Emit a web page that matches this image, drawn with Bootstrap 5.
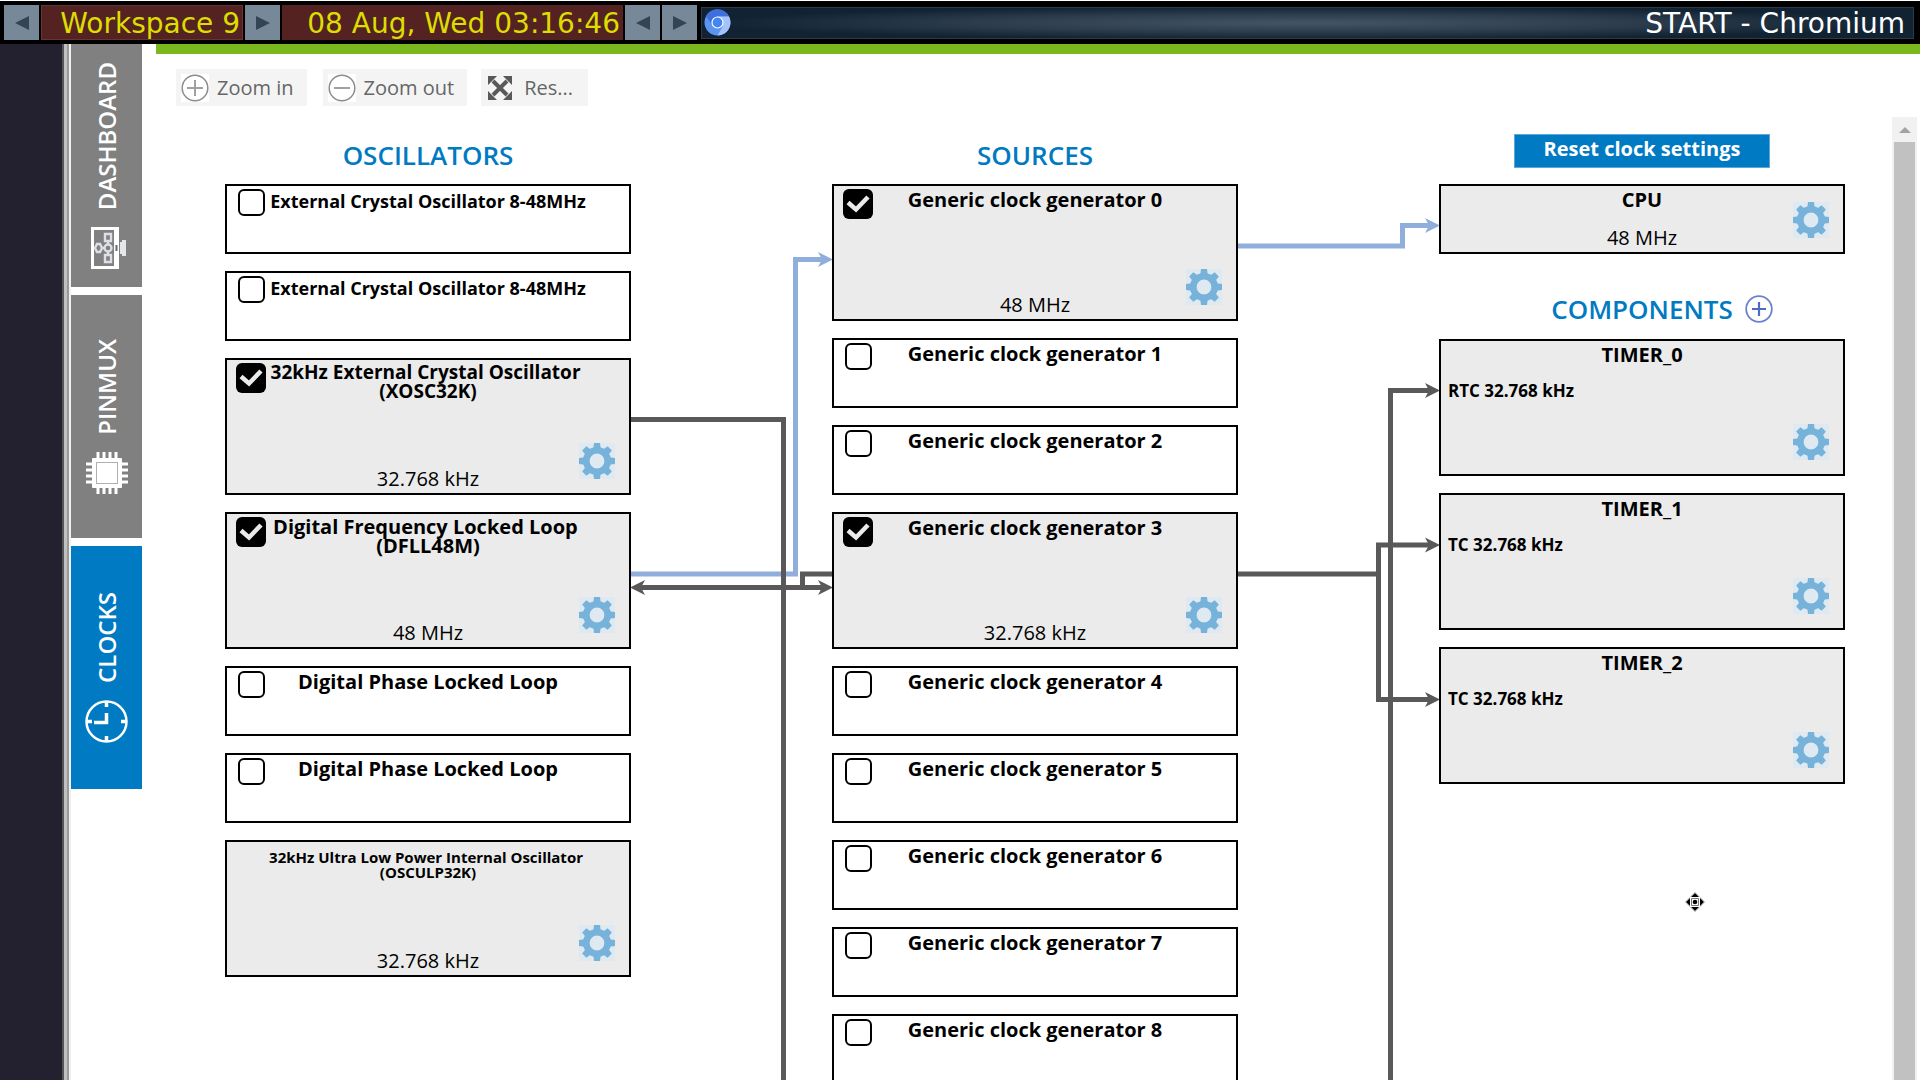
<!DOCTYPE html>
<html lang="en">
<head>
<meta charset="utf-8">
<meta name="viewport" content="width=device-width, initial-scale=1">
<title>START - Clocks</title>
<link href="https://cdn.jsdelivr.net/npm/bootstrap@5.3.0/dist/css/bootstrap.min.css" rel="stylesheet">
<style>
  body { font-family: "Open Sans", "Noto Sans", sans-serif; font-size: 20px; line-height: 24px; color: #000; background: #fff; }
  button { font-family: inherit; }

  /* desktop panel */
  .desk-bar { height: 44px; padding: 4px 6px 4px 4px; gap: 2px; background: #000; border-top: 1px solid #fff; font-family: "DejaVu Sans", sans-serif; font-size: 28px; line-height: 38px; }
  .desk-arrow { width: 35px; height: 35px; padding: 0; border: 0; background: #778899; color: #334455; }
  .desk-arrow svg { display: block; margin: auto; }
  .desk-cell { height: 35px; padding: 0 3px; background: #552222; color: #dddd00; text-align: right; white-space: nowrap; }
  .desk-space { width: 202px; border: 1px solid #6b3434; padding-right: 2px; line-height: 36px; }
  .desk-date { width: 341px; }
  .desk-title { height: 32px; margin-left: 2px; padding: 0 8px 0 2px; border: 1px solid #2c3b49; color: #fff;
    background: radial-gradient(ellipse 50% 55% at 50% 50%, #445566 0%, #2c3c4c 55%, #112233 100%); }
  .desk-title span { padding-top: 2px; }

  /* side rail */
  .rail-dark { width: 62px; background: #232130; }
  .rail-split { width: 9px; background: linear-gradient(90deg, #555 0 2px, #c0c0c0 2px 5px, #999 5px 7px, #f0f0f0 7px); }
  .side-tabs { width: 71px; gap: 8px; margin-right: 14px; }
  .side-tab { height: 243px; gap: 17px; background: #808080; color: #fff; font-size: 24px; line-height: 32px; text-decoration: none; }
  .side-tab.current { background: #007ac2; }
  .side-tab span { writing-mode: vertical-rl; transform: rotate(180deg); font-weight: 600; }

  /* tool buttons */
  .app-main { border-top: 10px solid #7ab81e; }
  .tool-row { padding: 15px 20px 11px; }
  .tool-btn { height: 37px; border: 0; background: #f4f4f4; color: #666; padding: 0 13px 0 5px; gap: 8px; }
  .tool-btn.reset-view { padding: 0 15px 0 7px; gap: 12px; margin-left: -2px; }

  /* diagram */
  .clock-canvas { padding: 0 47px 0 69px; }
  .wire-gap { width: 201px; }
  .wire-gap svg { display: block; overflow: visible; }
  .node-col { flex: 1 1 0; min-width: 0; gap: 17px; }
  .col-head { height: 50px; padding-top: 22px; margin: 0; font-size: 26px; line-height: 32px; font-weight: 600; color: #007ac2; text-align: center; }
  .col-head.with-add { height: 51px; padding: 24px 0 0 40px; gap: 12px; }
  .reset-clocks { width: 256px; height: 34px; margin: 17px auto 0; padding: 0 0 4px; border: 1px solid #5aa9da; background: #007ac2; color: #fff; font-weight: 700; line-height: 28px; }
  .head-slot { height: 50px; }
  .clk-node { height: 70px; flex-shrink: 0; border: 2px solid #000; background: #fff; position: relative; z-index: 1; }
  .clk-node.on { background: #ebebeb; }
  .clk-node.tall { height: 137px; }
  .tick-slot { width: 38px; }
  .tick-slot input { appearance: none; display: block; width: 27px; height: 27px; margin: 3px 0 0 11px; border: 2px solid #000; border-radius: 6px; background: #fff; }
  .tick-slot input:checked { width: 30px; height: 30px; margin-left: 9px; border: 0;
    background: #000 url("data:image/svg+xml,%3Csvg xmlns='http://www.w3.org/2000/svg' viewBox='0 0 30 30'%3E%3Cpath d='M5 13.500l8 7L25 8' fill='none' stroke='%23ebebeb' stroke-width='4.500'/%3E%3C/svg%3E"); }
  .node-name { padding-top: 2px; font-weight: 700; line-height: 24px; text-align: center; white-space: nowrap; }
  .node-name.two-line { padding-top: 3px; line-height: 19px; }
  .node-name.narrow { font-size: 19px; }
  .node-name.mid { padding-top: 3px; font-size: 18px; }
  .node-name.fine { padding-top: 8px; font-size: 15px; line-height: 15px; }
  .node-rate { position: absolute; left: 0; right: 0; bottom: 2px; text-align: center; }
  .node-input { padding: 12px 0 0 7px; font-size: 17px; font-weight: 700; }
  .gear-btn { position: absolute; right: 14px; bottom: 14px; width: 36px; height: 36px; padding: 0; border: 0; background: #dfe9f1; }
  .gear-btn svg, .add-btn svg { display: block; }
  .add-btn { padding: 0; border: 0; background: none; }

  .scroll-track { width: 25px; margin-right: 3px; background: #f1f1f1; }
  .scroll-thumb { margin: 0 2px; background: #c1c1c1; }
  .scroll-cap { height: 25px; }
  .move-pointer { position: absolute; left: 1685px; top: 892px; z-index: 5; }
</style>
<script src="https://cdn.jsdelivr.net/npm/bootstrap@5.3.0/dist/js/bootstrap.bundle.min.js"></script>
</head>
<body class="vh-100 overflow-hidden d-flex flex-column">

<svg class="d-none">
  <symbol id="gear" viewBox="0 0 36 36">
    <g fill="#76b2d9">
      <path id="tooth" d="M15 0h6l1 8h-8z"/>
      <use href="#tooth" transform="rotate(45 18 18)"/><use href="#tooth" transform="rotate(90 18 18)"/>
      <use href="#tooth" transform="rotate(135 18 18)"/><use href="#tooth" transform="rotate(180 18 18)"/>
      <use href="#tooth" transform="rotate(225 18 18)"/><use href="#tooth" transform="rotate(270 18 18)"/>
      <use href="#tooth" transform="rotate(315 18 18)"/>
    </g>
    <circle cx="18" cy="18" r="10.700" fill="none" stroke="#76b2d9" stroke-width="6.600"/>
  </symbol>
  <symbol id="tri-left" viewBox="0 0 14 14"><path d="M14 0v14L0 7z" fill="currentColor"/></symbol>
  <symbol id="tri-right" viewBox="0 0 14 14"><path d="M0 0v14l14-7z" fill="currentColor"/></symbol>
</svg>

<header class="desk-bar d-flex flex-shrink-0">
  <button class="desk-arrow" aria-label="Previous workspace"><svg width="14" height="14"><use href="#tri-left"/></svg></button>
  <div class="desk-cell desk-space">Workspace 9</div>
  <button class="desk-arrow" aria-label="Next workspace"><svg width="14" height="14"><use href="#tri-right"/></svg></button>
  <div class="desk-cell desk-date">08 Aug, Wed 03:16:46</div>
  <button class="desk-arrow" aria-label="Previous window"><svg width="14" height="14"><use href="#tri-left"/></svg></button>
  <button class="desk-arrow" aria-label="Next window"><svg width="14" height="14"><use href="#tri-right"/></svg></button>
  <div class="desk-title d-flex flex-fill justify-content-between align-items-center align-self-center">
    <svg width="27" height="27" viewBox="0 0 27 27">
      <circle cx="13.500" cy="13.500" r="13" fill="#5b95f0"/>
      <path d="M2 7A13 13 0 0 1 25 7.500H13.500L8 16z" fill="#3f6fdb"/>
      <path d="M13.500 7.500H25A13 13 0 0 1 13.500 26.500L19 17z" fill="#a5c3fb"/>
      <circle cx="13.500" cy="13.500" r="5.500" fill="#4285f4" stroke="#fff" stroke-width="1.200"/>
    </svg>
    <span>START - Chromium</span>
  </div>
</header>

<div class="d-flex flex-fill overflow-hidden">
  <div class="rail-dark flex-shrink-0"></div>
  <div class="rail-split flex-shrink-0"></div>
  <nav class="side-tabs d-flex flex-column flex-shrink-0">
    <a href="#" class="side-tab d-flex flex-column align-items-center justify-content-center flex-shrink-0">
      <span>DASHBOARD</span>
      <svg width="42" height="42" viewBox="0 0 42 42" fill="none" stroke="#fff">
        <path d="M6.500 1.500h25v39h-25z" stroke-width="3"/><path d="M28 1v40h5V1z" fill="#fff" stroke="none"/>
        <path d="M34 15h2v-2h4v16h-4v-2h-2z" fill="#e4e6ea" stroke="none"/><path d="M29.500 18h2v6h-2z" fill="#667" stroke="none"/>
        <g stroke-width="2.400" stroke="#dcdfe4"><path d="M19 7h6v7h-6zM19 28h6v7h-6z"/><circle cx="22" cy="21" r="3.500"/><path d="M9 21l2-4h3l2 4-2 4h-3zM16 21h3M22 14v4M22 24v4"/></g>
      </svg>
    </a>
    <a href="#" class="side-tab d-flex flex-column align-items-center justify-content-center flex-shrink-0">
      <span>PINMUX</span>
      <svg width="42" height="42" viewBox="0 0 42 42">
        <path d="M12 0v42M18 0v42M24 0v42M30 0v42M0 12h42M0 18h42M0 24h42M0 30h42" stroke="#fff" stroke-width="3"/>
        <rect x="6" y="6" width="30" height="30" rx="1" fill="#fff"/>
        <rect x="10.500" y="10.500" width="21" height="21" fill="#fff" stroke="#b0b0b0"/>
      </svg>
    </a>
    <a href="#" class="side-tab current d-flex flex-column align-items-center justify-content-center flex-shrink-0">
      <span>CLOCKS</span>
      <svg width="43" height="43" viewBox="0 0 43 43" fill="none" stroke="#fff">
        <circle cx="21.500" cy="21.500" r="20" stroke-width="2.500"/>
        <path d="M21.500 1v6M21.500 36v6M1 21.500h6M36 21.500h6" stroke-width="3.500"/>
        <path d="M21.500 13v9.500H9" stroke-width="3.500"/>
      </svg>
    </a>
  </nav>

  <main class="app-main d-flex flex-column flex-fill overflow-hidden">
    <div class="tool-row d-flex gap-3 flex-shrink-0">
      <button class="tool-btn d-flex align-items-center">
        <svg width="28" height="28" viewBox="0 0 28 28" fill="none" stroke="#8c8c8c"><path d="M0 0h28v28H0z" fill="#fff" stroke="none"/><circle cx="14" cy="14" r="12.800" stroke-width="1.500"/><path d="M6 14h16M14 6v16" stroke-width="2" stroke="#a0a0a0"/></svg>
        Zoom in
      </button>
      <button class="tool-btn d-flex align-items-center">
        <svg width="28" height="28" viewBox="0 0 28 28" fill="none" stroke="#8c8c8c"><path d="M0 0h28v28H0z" fill="#fff" stroke="none"/><circle cx="14" cy="14" r="12.800" stroke-width="1.500"/><path d="M6 14h16" stroke-width="2" stroke="#a0a0a0"/></svg>
        Zoom out
      </button>
      <button class="tool-btn reset-view d-flex align-items-center">
        <svg width="24" height="24" viewBox="0 0 24 24"><path d="M5 5l14 14M19 5L5 19" stroke="#595959" stroke-width="4"/><path d="M0 0h9L0 9zM24 0v9l-9-9zM0 24v-9l9 9zM24 24h-9l9-9z" fill="#595959"/></svg>
        Res...
      </button>
    </div>

    <div class="d-flex flex-fill overflow-hidden">
      <div class="clock-canvas d-flex flex-fill overflow-hidden">

        <section class="node-col d-flex flex-column">
          <h2 class="col-head">OSCILLATORS</h2>
          <div class="clk-node d-flex">
            <div class="tick-slot"><input type="checkbox" id="xosc0"></div>
            <label class="node-name mid flex-fill" for="xosc0">External Crystal Oscillator 8-48MHz</label><div class="tick-slot"></div>
          </div>
          <div class="clk-node d-flex">
            <div class="tick-slot"><input type="checkbox" id="xosc1"></div>
            <label class="node-name mid flex-fill" for="xosc1">External Crystal Oscillator 8-48MHz</label><div class="tick-slot"></div>
          </div>
          <div class="clk-node tall on d-flex">
            <div class="tick-slot"><input type="checkbox" id="xosc32k" checked></div>
            <label class="node-name two-line narrow flex-fill" for="xosc32k">32kHz External Crystal Oscillator&nbsp;<br>(XOSC32K)</label><div class="tick-slot"></div>
            <div class="node-rate">32.768 kHz</div>
            <button class="gear-btn" aria-label="XOSC32K settings"><svg width="36" height="36"><use href="#gear"/></svg></button>
          </div>
          <div class="clk-node tall on d-flex">
            <div class="tick-slot"><input type="checkbox" id="dfll" checked></div>
            <label class="node-name two-line flex-fill" for="dfll">Digital Frequency Locked Loop&nbsp;<br>(DFLL48M)</label><div class="tick-slot"></div>
            <div class="node-rate">48 MHz</div>
            <button class="gear-btn" aria-label="DFLL48M settings"><svg width="36" height="36"><use href="#gear"/></svg></button>
          </div>
          <div class="clk-node d-flex">
            <div class="tick-slot"><input type="checkbox" id="dpll0"></div>
            <label class="node-name flex-fill" for="dpll0">Digital Phase Locked Loop</label><div class="tick-slot"></div>
          </div>
          <div class="clk-node d-flex">
            <div class="tick-slot"><input type="checkbox" id="dpll1"></div>
            <label class="node-name flex-fill" for="dpll1">Digital Phase Locked Loop</label><div class="tick-slot"></div>
          </div>
          <div class="clk-node tall on">
            <div class="node-name fine">32kHz Ultra Low Power Internal Oscillator&nbsp;<br>(OSCULP32K)</div>
            <div class="node-rate">32.768 kHz</div>
            <button class="gear-btn" aria-label="OSCULP32K settings"><svg width="36" height="36"><use href="#gear"/></svg></button>
          </div>
        </section>

        <div class="wire-gap flex-shrink-0">
          <svg width="201" height="963" viewBox="631 117 201 963" fill="none" stroke-width="5">
            <path d="M631 574H795.500V259.500H826" stroke="#8faedc"/>
            <path d="M833 259.500l-15-7.500 4 7.500-4 7.500z" fill="#8faedc"/>
            <path d="M631 419.500H783.500V1100M637 587.500H826M832 574H802.500V587.500" stroke="#595959"/>
            <path d="M833 587.500l-15-7.500 4 7.500-4 7.500zM630 587.500l15-7.500-4 7.500 4 7.500z" fill="#595959"/>
          </svg>
        </div>

        <section class="node-col d-flex flex-column">
          <h2 class="col-head">SOURCES</h2>
          <div class="clk-node tall on d-flex">
            <div class="tick-slot"><input type="checkbox" id="gen0" checked></div>
            <label class="node-name flex-fill" for="gen0">Generic clock generator 0</label><div class="tick-slot"></div>
            <div class="node-rate">48 MHz</div>
            <button class="gear-btn" aria-label="Generator 0 settings"><svg width="36" height="36"><use href="#gear"/></svg></button>
          </div>
          <div class="clk-node d-flex">
            <div class="tick-slot"><input type="checkbox" id="gen1"></div>
            <label class="node-name flex-fill" for="gen1">Generic clock generator 1</label><div class="tick-slot"></div>
          </div>
          <div class="clk-node d-flex">
            <div class="tick-slot"><input type="checkbox" id="gen2"></div>
            <label class="node-name flex-fill" for="gen2">Generic clock generator 2</label><div class="tick-slot"></div>
          </div>
          <div class="clk-node tall on d-flex">
            <div class="tick-slot"><input type="checkbox" id="gen3" checked></div>
            <label class="node-name flex-fill" for="gen3">Generic clock generator 3</label><div class="tick-slot"></div>
            <div class="node-rate">32.768 kHz</div>
            <button class="gear-btn" aria-label="Generator 3 settings"><svg width="36" height="36"><use href="#gear"/></svg></button>
          </div>
          <div class="clk-node d-flex">
            <div class="tick-slot"><input type="checkbox" id="gen4"></div>
            <label class="node-name flex-fill" for="gen4">Generic clock generator 4</label><div class="tick-slot"></div>
          </div>
          <div class="clk-node d-flex">
            <div class="tick-slot"><input type="checkbox" id="gen5"></div>
            <label class="node-name flex-fill" for="gen5">Generic clock generator 5</label><div class="tick-slot"></div>
          </div>
          <div class="clk-node d-flex">
            <div class="tick-slot"><input type="checkbox" id="gen6"></div>
            <label class="node-name flex-fill" for="gen6">Generic clock generator 6</label><div class="tick-slot"></div>
          </div>
          <div class="clk-node d-flex">
            <div class="tick-slot"><input type="checkbox" id="gen7"></div>
            <label class="node-name flex-fill" for="gen7">Generic clock generator 7</label><div class="tick-slot"></div>
          </div>
          <div class="clk-node d-flex">
            <div class="tick-slot"><input type="checkbox" id="gen8"></div>
            <label class="node-name flex-fill" for="gen8">Generic clock generator 8</label><div class="tick-slot"></div>
          </div>
        </section>

        <div class="wire-gap flex-shrink-0">
          <svg width="201" height="963" viewBox="1238 117 201 963" fill="none" stroke-width="5">
            <path d="M1238 246H1402.500V225.500H1433" stroke="#8faedc"/>
            <path d="M1440 225.500l-15-7.500 4 7.500-4 7.500z" fill="#8faedc"/>
            <path d="M1238 574H1378.500M1433 545H1378.500V699.500H1433M1433 390.500H1390.500V1100" stroke="#595959"/>
            <path d="M1440 390.500l-15-7.500 4 7.500-4 7.500zM1440 545l-15-7.500 4 7.500-4 7.500zM1440 699.500l-15-7.500 4 7.500-4 7.500z" fill="#595959"/>
          </svg>
        </div>

        <section class="node-col d-flex flex-column">
          <div class="head-slot d-flex"><button class="reset-clocks">Reset clock settings</button></div>
          <div class="clk-node on">
            <div class="node-name">CPU</div>
            <div class="node-rate">48 MHz</div>
            <button class="gear-btn" aria-label="CPU settings"><svg width="36" height="36"><use href="#gear"/></svg></button>
          </div>
          <h2 class="col-head with-add d-flex align-items-center justify-content-center">COMPONENTS
            <button class="add-btn" aria-label="Add component"><svg width="28" height="28" viewBox="0 0 28 28" fill="none" stroke="#6a82cc"><circle cx="14" cy="14" r="12.800" stroke-width="1.800"/><path d="M7 14h14M14 7v14" stroke="#4f6cc4" stroke-width="2.200"/></svg></button>
          </h2>
          <div class="clk-node tall on">
            <div class="node-name">TIMER_0</div><div class="node-input">RTC 32.768 kHz</div>
            <button class="gear-btn" aria-label="TIMER_0 settings"><svg width="36" height="36"><use href="#gear"/></svg></button>
          </div>
          <div class="clk-node tall on">
            <div class="node-name">TIMER_1</div><div class="node-input">TC 32.768 kHz</div>
            <button class="gear-btn" aria-label="TIMER_1 settings"><svg width="36" height="36"><use href="#gear"/></svg></button>
          </div>
          <div class="clk-node tall on">
            <div class="node-name">TIMER_2</div><div class="node-input">TC 32.768 kHz</div>
            <button class="gear-btn" aria-label="TIMER_2 settings"><svg width="36" height="36"><use href="#gear"/></svg></button>
          </div>
        </section>
      </div>

      <div class="scroll-track d-flex flex-column flex-shrink-0">
        <div class="scroll-cap d-flex align-items-center justify-content-center"><svg width="12" height="6" viewBox="0 0 12 6"><path d="M6 0l6 6H0z" fill="#a3a3a3"/></svg></div>
        <div class="scroll-thumb flex-fill"></div>
      </div>
    </div>
  </main>
</div>

<svg class="move-pointer" width="20" height="20" viewBox="0 0 20 20">
  <path d="M10 0l10 10-10 10L0 10z" fill="#fff" stroke="#bbb" stroke-width=".7"/>
  <path d="M10 1l4 4H6zM10 19l4-4H6zM1 10l4-4v8zM19 10l-4-4v8z"/><circle cx="10" cy="10" r="2.300"/><path d="M6.500 6.500h7v7h-7z" fill="none" stroke="#777"/>
</svg>
</body>
</html>
